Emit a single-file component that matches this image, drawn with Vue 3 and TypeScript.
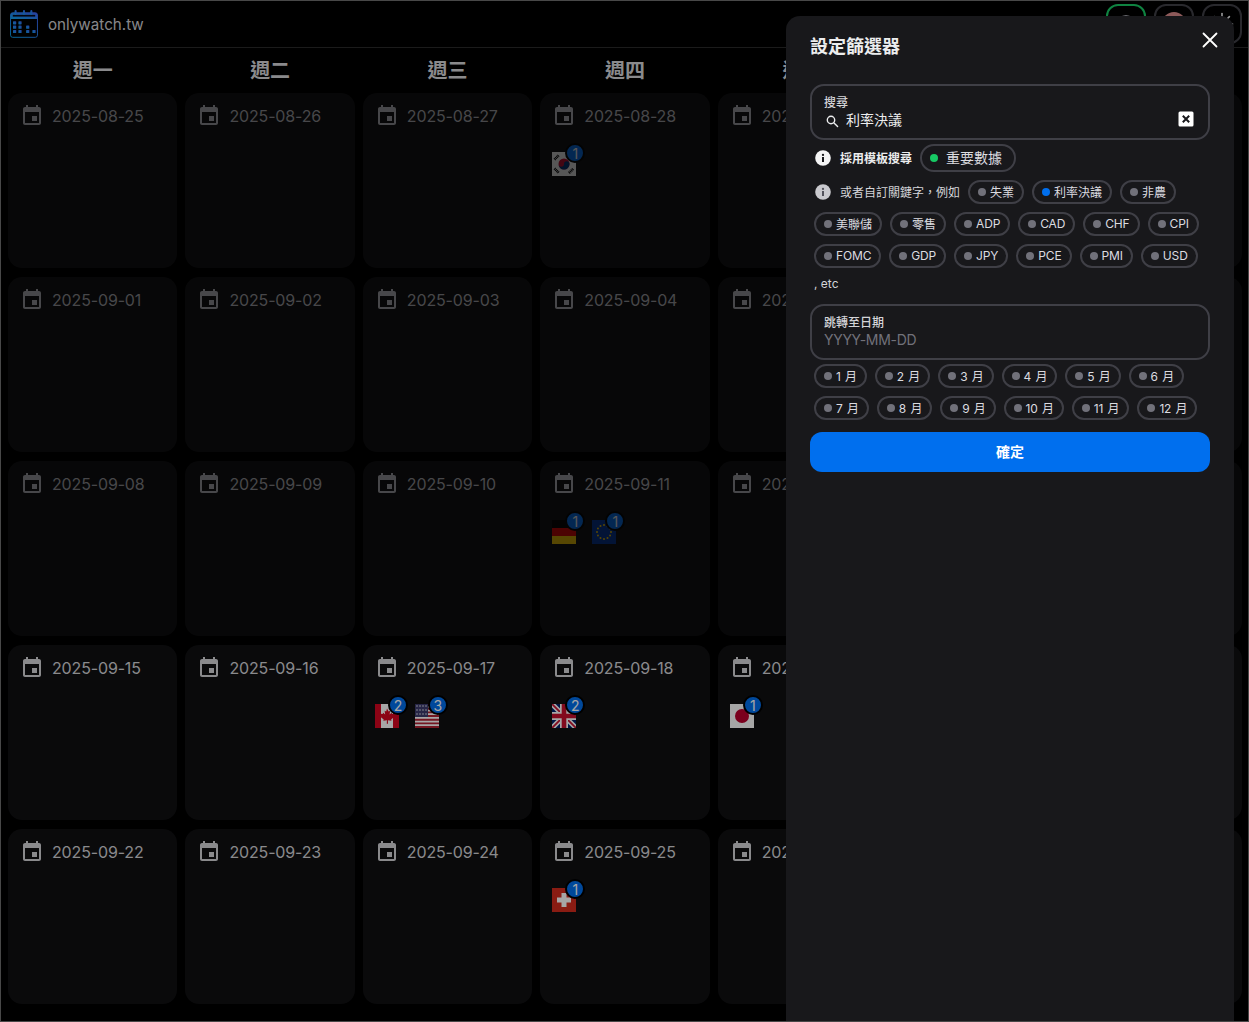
<script setup lang="ts">
interface DayFlag {
  code: string
  count: number
}

const weekNames = ['週一', '週二', '週三', '週四', '週五', '週六', '週日']

const weeks: { days: string[]; past: boolean }[] = [
  { days: ['2025-08-25', '2025-08-26', '2025-08-27', '2025-08-28', '2025-08-29', '2025-08-30', '2025-08-31'], past: true },
  { days: ['2025-09-01', '2025-09-02', '2025-09-03', '2025-09-04', '2025-09-05', '2025-09-06', '2025-09-07'], past: true },
  { days: ['2025-09-08', '2025-09-09', '2025-09-10', '2025-09-11', '2025-09-12', '2025-09-13', '2025-09-14'], past: true },
  { days: ['2025-09-15', '2025-09-16', '2025-09-17', '2025-09-18', '2025-09-19', '2025-09-20', '2025-09-21'], past: false },
  { days: ['2025-09-22', '2025-09-23', '2025-09-24', '2025-09-25', '2025-09-26', '2025-09-27', '2025-09-28'], past: false },
]

const flagsByDay: Record<string, DayFlag[]> = {
  '2025-08-28': [{ code: 'kr', count: 1 }],
  '2025-09-11': [{ code: 'de', count: 1 }, { code: 'eu', count: 1 }],
  '2025-09-17': [{ code: 'ca', count: 2 }, { code: 'us', count: 3 }],
  '2025-09-18': [{ code: 'gb', count: 2 }],
  '2025-09-19': [{ code: 'jp', count: 1 }],
  '2025-09-25': [{ code: 'ch', count: 1 }],
}

const keywords = ['失業', '利率決議', '非農', '美聯儲', '零售', 'ADP', 'CAD', 'CHF', 'CPI', 'FOMC', 'GDP', 'JPY', 'PCE', 'PMI', 'USD']
const months = Array.from({ length: 12 }, (_, i) => `${i + 1} 月`)

const isLatin = (k: string) => /^[A-Z]+$/.test(k)

const euStars = Array.from({ length: 12 }, (_, i) => ({
  x: 12 + 7 * Math.cos((i * Math.PI) / 6),
  y: 12 + 7 * Math.sin((i * Math.PI) / 6),
}))

// logo squares, laid out like a small bar chart
const logoCells = [
  [4.3, 16], [12, 16],
  [4.3, 22.2], [12, 22.2], [23, 22.2],
  [4.3, 28.4], [12, 28.4], [23, 28.4], [32, 28.4],
]
const sunRays = Array.from({ length: 8 }, (_, i) => i * 45)
</script>

<template>
  <div class="page">
    <header class="navbar">
      <div class="brand">
        <svg class="logo" width="28" height="28" viewBox="0 0 40 40">
          <defs>
            <linearGradient id="logoGrad" x1="0" y1="1" x2="1" y2="0">
              <stop offset="0" stop-color="#0ba3ed" />
              <stop offset="1" stop-color="#4161f6" />
            </linearGradient>
          </defs>
          <rect x=".8" y="4" width="38.4" height="35" rx="3" fill="none" stroke="url(#logoGrad)" stroke-width="1.4" />
          <path d="M.8 7a3 3 0 0 1 3-3h32.4a3 3 0 0 1 3 3v6H.8z" fill="url(#logoGrad)" />
          <rect x="4" y="7" width="32" height="2.4" fill="#05081a" />
          <rect x="6.5" y="0" width="3" height="7" rx="1.5" fill="url(#logoGrad)" />
          <rect x="18.5" y="0" width="3" height="7" rx="1.5" fill="url(#logoGrad)" />
          <rect x="29" y="0" width="3" height="7" rx="1.5" fill="url(#logoGrad)" />
          <rect v-for="c in logoCells" :key="c.join()" :x="c[0]" :y="c[1]" width="4.6" height="4.6" rx=".8" fill="url(#logoGrad)" />
        </svg>
        <span class="brand-name">onlywatch.tw</span>
      </div>
      <div class="nav-actions">
        <div class="nav-btn green">
          <svg width="20" height="20" viewBox="0 0 20 20" fill="none" stroke="#a1a1aa" stroke-width="2">
            <circle cx="10" cy="10" r="8" />
          </svg>
        </div>
        <div class="nav-btn">
          <span class="nav-avatar"></span>
        </div>
        <div class="nav-btn">
          <svg width="24" height="24" viewBox="0 0 24 24" fill="none" stroke="#ecedee" stroke-width="1.6" stroke-linecap="round">
            <circle cx="12" cy="12" r="4.5" />
            <path v-for="r in sunRays" :key="r" d="M12 1.5v2.5" :transform="`rotate(${r} 12 12)`" />
          </svg>
        </div>
      </div>
    </header>

    <div class="week-names">
      <div v-for="name in weekNames" :key="name" class="week-name"><span>{{ name }}</span></div>
    </div>

    <main class="calendar">
      <template v-for="week in weeks" :key="week.days[0]">
        <section v-for="day in week.days" :key="day" class="day-card" :class="{ past: week.past }">
          <div class="day-head">
            <svg width="24" height="24" viewBox="0 0 24 24" fill="currentColor">
              <path d="M17 12h-5v5h5v-5zM16 1v2H8V1H6v2H5c-1.11 0-1.99.9-1.99 2L3 19c0 1.1.89 2 2 2h14c1.1 0 2-.9 2-2V5c0-1.1-.9-2-2-2h-1V1h-2zm3 18H5V8h14v11z" />
            </svg>
            <span>{{ day }}</span>
          </div>
          <div v-if="flagsByDay[day]" class="day-flags">
            <div v-for="f in flagsByDay[day]" :key="f.code" class="flag">
              <svg width="24" height="24" viewBox="0 0 24 24">
                <template v-if="f.code === 'kr'">
                  <rect width="24" height="24" fill="#fff" />
                  <circle cx="12" cy="12" r="5.5" fill="#c60c30" />
                  <path d="M6.5 12a5.5 5.5 0 0 0 11 0a2.75 2.75 0 0 0-5.5 0a2.75 2.75 0 0 1-5.5 0z" fill="#003478" />
                  <g stroke="#000" stroke-width="2.6" stroke-dasharray="1 .6">
                    <path d="M2.5 7.5 7 3M17 3l4.5 4.5M2.5 16.5 7 21M17 21l4.5-4.5" />
                  </g>
                </template>
                <template v-else-if="f.code === 'de'">
                  <rect width="24" height="8" fill="#000" />
                  <rect y="8" width="24" height="8" fill="#dd0000" />
                  <rect y="16" width="24" height="8" fill="#ffce00" />
                </template>
                <template v-else-if="f.code === 'eu'">
                  <rect width="24" height="24" fill="#003399" />
                  <circle v-for="(s, i) in euStars" :key="i" :cx="s.x" :cy="s.y" r="1" fill="#ffcc00" />
                </template>
                <template v-else-if="f.code === 'ca'">
                  <rect width="24" height="24" fill="#fff" />
                  <rect width="6" height="24" fill="#d80621" />
                  <rect x="18" width="6" height="24" fill="#d80621" />
                  <path d="M12 4.5l1.6 3 1.6-.8-.6 3.8 2-1.8.5 1.4 2.2-.3-.7 2.4.9.5-3.4 2.8.4 1.3-3.6-.5.1 3.4h-1.2l.1-3.4-3.6.5.4-1.3-3.4-2.8.9-.5-.7-2.4 2.2.3.5-1.4 2 1.8-.6-3.8 1.6.8z" fill="#d80621" />
                </template>
                <template v-else-if="f.code === 'us'">
                  <rect width="24" height="24" fill="#fff" />
                  <path d="M0 1h24M0 4.7h24M0 8.4h24M0 12h24M0 15.7h24M0 19.4h24M0 23h24" stroke="#b22234" stroke-width="1.85" />
                  <rect width="13" height="13" fill="#3c3b6e" />
                  <g fill="#fff">
                    <circle v-for="n in 12" :key="n" :cx="2 + ((n - 1) % 4) * 3" :cy="2 + Math.floor((n - 1) / 4) * 4" r=".7" />
                  </g>
                </template>
                <template v-else-if="f.code === 'gb'">
                  <rect width="24" height="24" fill="#012169" />
                  <path d="M0 0l24 24M24 0L0 24" stroke="#fff" stroke-width="5" />
                  <path d="M0 0l24 24M24 0L0 24" stroke="#c8102e" stroke-width="1.8" />
                  <path d="M12 0v24M0 12h24" stroke="#fff" stroke-width="8" />
                  <path d="M12 0v24M0 12h24" stroke="#c8102e" stroke-width="4.6" />
                </template>
                <template v-else-if="f.code === 'jp'">
                  <rect width="24" height="24" fill="#fff" />
                  <circle cx="12" cy="12" r="7" fill="#bc002d" />
                </template>
                <template v-else-if="f.code === 'ch'">
                  <rect width="24" height="24" fill="#d52b1e" />
                  <path d="M9.5 5h5v4.5H19v5h-4.5V19h-5v-4.5H5v-5h4.5z" fill="#fff" />
                </template>
              </svg>
              <span class="badge">{{ f.count }}</span>
            </div>
          </div>
        </section>
      </template>
    </main>

    <div class="scrim"></div>

    <aside class="drawer">
      <div class="drawer-head">
        <h2>設定篩選器</h2>
        <svg class="close" width="16" height="16" viewBox="0 0 16 16" fill="none" stroke="#fff" stroke-width="1.8" stroke-linecap="round">
          <path d="M1.5 1.5l13 13M14.5 1.5l-13 13" />
        </svg>
      </div>
      <div class="drawer-body">
        <div class="field">
          <label>搜尋</label>
          <div class="field-line">
            <svg class="search-icon" width="16" height="16" viewBox="0 0 16 16" fill="none" stroke="#ecedee" stroke-width="1.4" stroke-linecap="round">
              <circle cx="7" cy="7" r="3.7" />
              <path d="M10 10l3.6 3.6" />
            </svg>
            <span class="field-value">利率決議</span>
            <svg class="clear" width="16" height="16" viewBox="0 0 16 16">
              <rect x=".5" y=".5" width="15" height="15" rx="1.5" fill="#fff" />
              <path d="M4.8 4.8l6.4 6.4M11.2 4.8l-6.4 6.4" stroke="#18181b" stroke-width="2" />
            </svg>
          </div>
        </div>

        <div class="chip-row template-row">
          <svg width="18" height="18" viewBox="-1 -1 18 18">
            <circle cx="8" cy="8" r="7.8" fill="#f4f4f5" />
            <rect x="7" y="7" width="2" height="5" fill="#18181b" />
            <circle cx="8" cy="4.9" r="1.15" fill="#18181b" />
          </svg>
          <span class="row-title">採用模板搜尋</span>
          <span class="chip big"><i class="dot green"></i><span class="label">重要數據</span></span>
        </div>

        <div class="chip-row">
          <svg width="18" height="18" viewBox="-1 -1 18 18">
            <circle cx="8" cy="8" r="7.8" fill="#c9c9ce" />
            <rect x="7" y="7" width="2" height="5" fill="#52525b" />
            <circle cx="8" cy="4.9" r="1.15" fill="#52525b" />
          </svg>
          <span class="row-text">或者自訂關鍵字，例如</span>
          <span v-for="k in keywords" :key="k" class="chip" :class="{ latin: isLatin(k) }">
            <i class="dot" :class="{ blue: k === '利率決議' }"></i><span class="label">{{ k }}</span>
          </span>
        </div>
        <p class="etc">, etc</p>

        <div class="field date-field">
          <label>跳轉至日期</label>
          <span class="placeholder">YYYY-MM-DD</span>
        </div>

        <div class="chip-row month-row">
          <span v-for="m in months" :key="m" class="chip"><i class="dot"></i><span class="label">{{ m }}</span></span>
        </div>

        <button class="confirm"><span>確定</span></button>
      </div>
    </aside>
  </div>
</template>

<style scoped>
.page {
  position: relative;
  box-sizing: border-box;
  width: 1249px;
  height: 1022px;
  overflow: hidden;
  background: #000;
  border: 1px solid #484848;
  color: #ecedee;
  font-family: Inter, "Noto Sans CJK TC", sans-serif;
}

.navbar {
  display: flex;
  justify-content: space-between;
  align-items: center;
  box-sizing: border-box;
  height: 47px;
  padding: 0 6px 0 9px;
  border-bottom: 1px solid #2a2a2a;
}

.brand {
  display: flex;
  align-items: center;
  gap: 10px;
}

.brand-name {
  font-size: 15.2px;
  color: #cfcfd3;
}

.nav-actions {
  display: flex;
  gap: 8px;
}

.nav-btn {
  display: flex;
  align-items: center;
  justify-content: center;
  box-sizing: border-box;
  width: 40px;
  height: 40px;
  border: 2px solid #3f3f46;
  border-radius: 12px;
  overflow: hidden;
}

.nav-btn.green {
  border-color: #17c964;
}

.nav-avatar {
  width: 24px;
  height: 24px;
  border-radius: 50%;
  background: #d98a8a;
}

.week-names,
.calendar {
  display: grid;
  grid-template-columns: repeat(7, minmax(0, 1fr));
  column-gap: 8px;
  padding: 0 6px 0 7px;
}

.calendar {
  grid-auto-rows: 175px;
  row-gap: 9px;
}

.week-name {
  display: flex;
  align-items: center;
  justify-content: center;
  height: 45px;
  font-size: 20px;
  font-weight: 600;
  color: #d4d4d8;
}

.week-name span {
  margin-top: -2px;
}

.day-card {
  box-sizing: border-box;
  padding: 11px 12px;
  background: #101012;
  border-radius: 14px;
  color: #d4d4d8;
  font-size: 16px;
  letter-spacing: -0.15px;
}

.day-card.past {
  color: #6e6e72;
  background: #0c0c0d;
}

.day-head {
  display: flex;
  align-items: center;
  gap: 8px;
  height: 24px;
}

.day-flags {
  display: flex;
  gap: 16px;
  margin-top: 24px;
}

.past .day-flags {
  opacity: 0.5;
}

.flag {
  position: relative;
  width: 24px;
  height: 24px;
}

.flag svg {
  display: block;
}

.badge {
  position: absolute;
  top: -9px;
  left: 13px;
  box-sizing: border-box;
  width: 20px;
  height: 20px;
  display: flex;
  align-items: center;
  justify-content: center;
  border: 2px solid #000;
  border-radius: 50%;
  background: #006fee;
  color: #fff;
  font-size: 14px;
}

.scrim {
  position: absolute;
  inset: 0;
  background: rgba(0, 0, 0, 0.35);
}

.drawer {
  position: absolute;
  top: 15px;
  left: 785px;
  bottom: 0;
  box-sizing: border-box;
  width: 448px;
  background: #18181b;
  border-radius: 14px 14px 0 0;
}

.drawer-head {
  display: flex;
  align-items: center;
  justify-content: space-between;
  height: 60px;
  padding: 0 16px 0 24px;
}

.drawer-head h2 {
  margin: 0 0 2px;
  font-size: 18px;
  font-weight: 600;
}

.close {
  margin-top: -12px;
}

.drawer-body {
  display: flex;
  flex-direction: column;
  padding: 8px 24px;
}

.field {
  box-sizing: border-box;
  height: 56px;
  padding: 9px 12px 0;
  border: 2px solid #3f3f46;
  border-radius: 14px;
}

.field label {
  display: block;
  font-size: 12px;
  line-height: 16px;
  font-weight: 500;
  color: #d4d4d8;
}

.field-line {
  display: flex;
  align-items: center;
  gap: 6px;
  height: 18px;
}

.search-icon {
  margin-top: 2px;
}

.field-value {
  flex: 1;
  font-size: 14px;
  line-height: 18px;
}

.clear {
  margin: -3px 2px 0 0;
}

.chip-row {
  display: flex;
  flex-wrap: wrap;
  align-items: center;
  gap: 8px;
  padding: 0 4px;
  margin-top: 8px;
  font-size: 12px;
}

.template-row {
  margin-top: 4px;
}

.row-title {
  font-weight: 600;
  margin-top: -2px;
}

.row-text {
  color: #d4d4d8;
  margin-top: -2px;
}

.chip {
  display: inline-flex;
  align-items: center;
  gap: 4px;
  box-sizing: border-box;
  height: 24px;
  padding: 0 8px;
  border: 2px solid #3f3f46;
  border-radius: 999px;
  color: #dcdce0;
  white-space: nowrap;
}

.chip.big {
  gap: 8px;
  height: 28px;
  padding: 0 12px 0 8px;
  font-size: 14px;
}

.chip.latin {
  letter-spacing: -0.15px;
}

.label {
  margin-top: -2px;
}

.month-row .label {
  word-spacing: 1.2px;
  letter-spacing: -0.2px;
}

.dot {
  width: 8px;
  height: 8px;
  border-radius: 50%;
  background: #71717a;
}

.dot.green {
  background: #17c964;
}

.dot.blue {
  background: #006fee;
}

.etc {
  margin: 8px 0 0;
  padding: 0 4px;
  font-size: 12px;
  line-height: 16px;
  color: #d4d4d8;
}

.date-field {
  margin-top: 12px;
}

.placeholder {
  display: block;
  font-size: 14px;
  line-height: 18px;
  letter-spacing: -0.3px;
  color: #71717a;
}

.month-row {
  margin-top: 4px;
}

.confirm {
  height: 40px;
  margin-top: 12px;
  padding: 0 0 2px;
  border: 0;
  border-radius: 12px;
  background: #006fee;
  color: #fff;
  font-family: inherit;
  font-size: 14px;
  font-weight: 600;
}
</style>

<style>
body {
  background: #000;
  overflow: hidden;
}
</style>
